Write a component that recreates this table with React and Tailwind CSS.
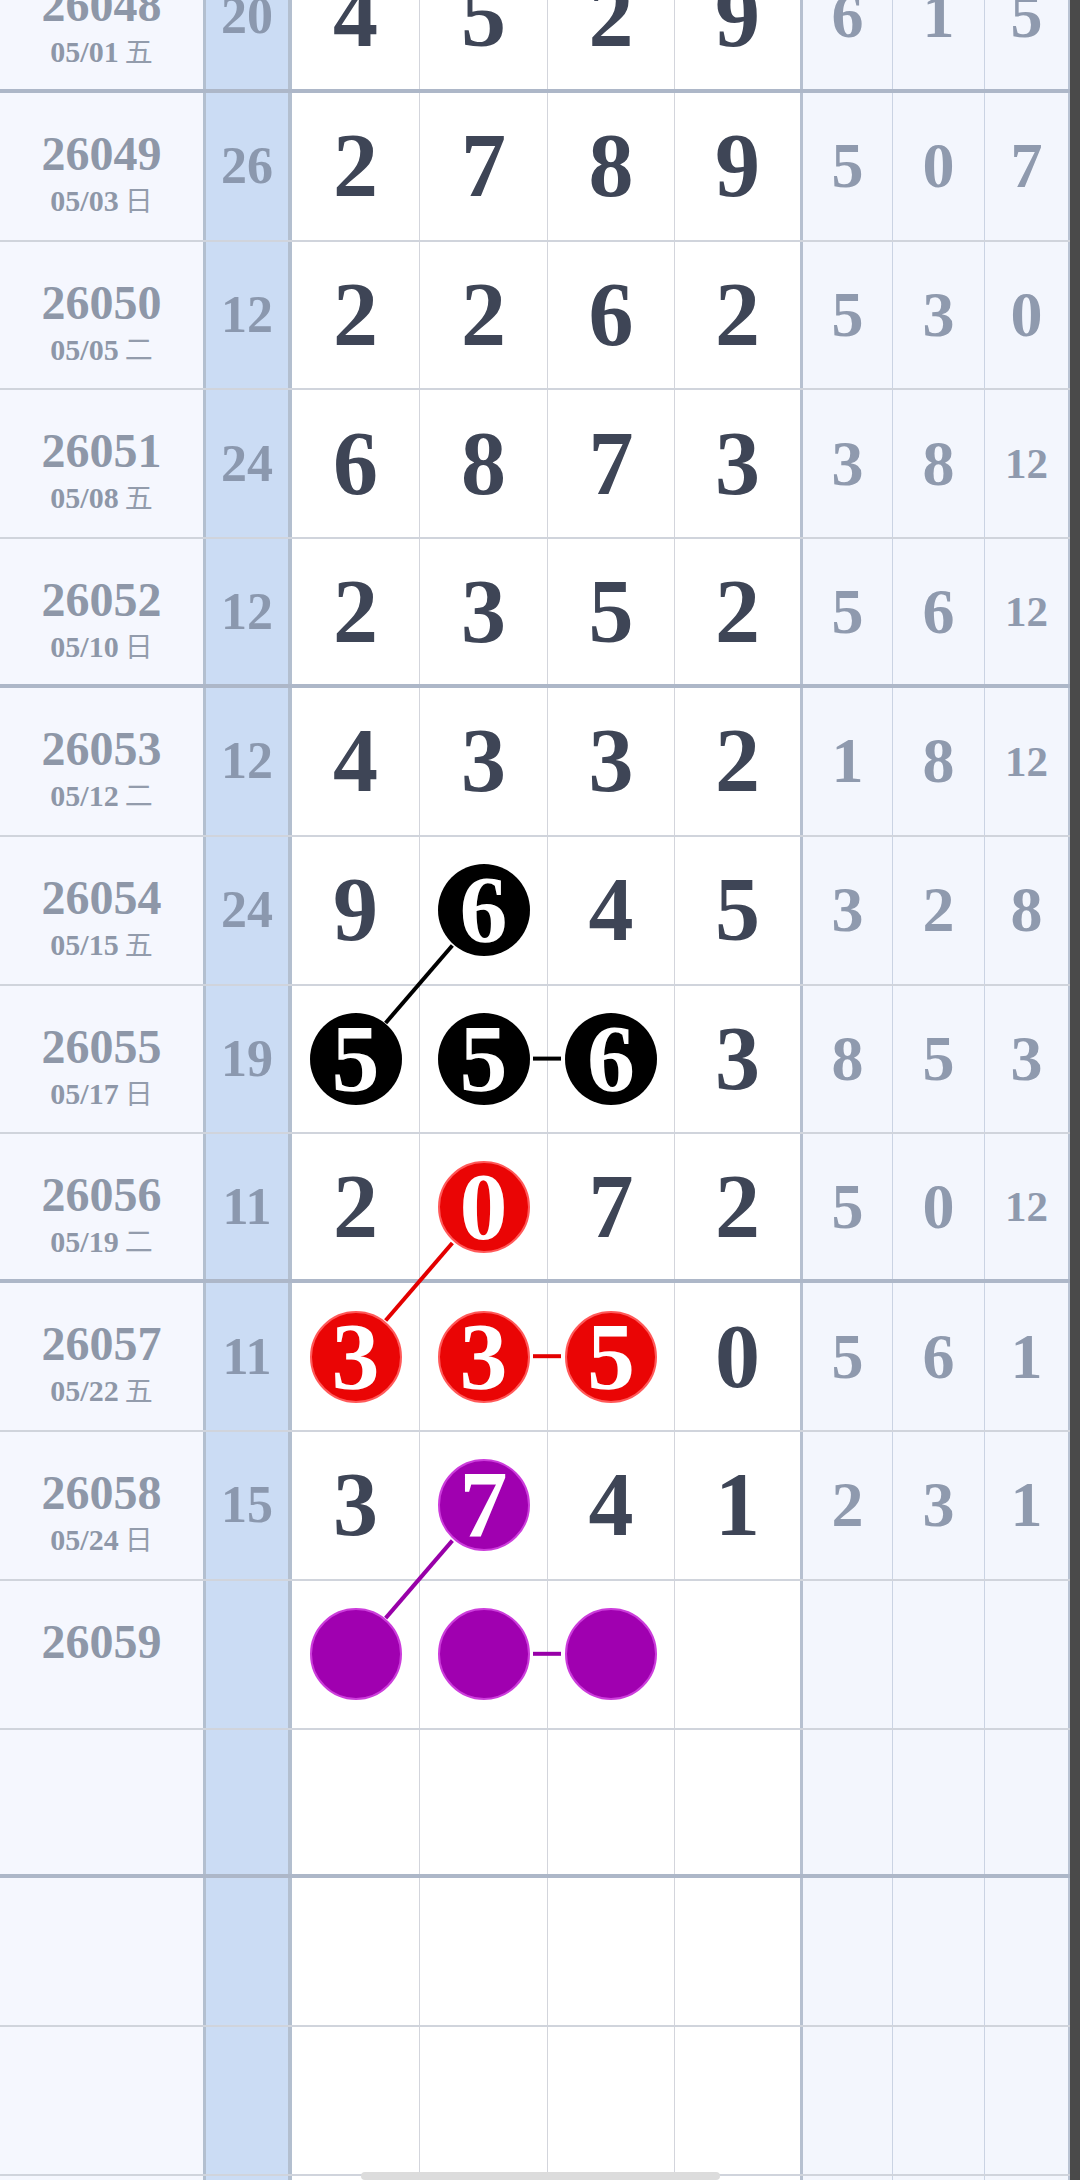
const ROWS = [
  { no: '26048', date: '05/01', wd: '五', sum: '20', d: [4, 5, 2, 9], s: [6, 1, 5] },
  { no: '26049', date: '05/03', wd: '日', sum: '26', d: [2, 7, 8, 9], s: [5, 0, 7] },
  { no: '26050', date: '05/05', wd: '二', sum: '12', d: [2, 2, 6, 2], s: [5, 3, 0] },
  { no: '26051', date: '05/08', wd: '五', sum: '24', d: [6, 8, 7, 3], s: [3, 8, 12] },
  { no: '26052', date: '05/10', wd: '日', sum: '12', d: [2, 3, 5, 2], s: [5, 6, 12] },
  { no: '26053', date: '05/12', wd: '二', sum: '12', d: [4, 3, 3, 2], s: [1, 8, 12] },
  { no: '26054', date: '05/15', wd: '五', sum: '24', d: [9, 6, 4, 5], s: [3, 2, 8], balls: { 1: 'black' } },
  { no: '26055', date: '05/17', wd: '日', sum: '19', d: [5, 5, 6, 3], s: [8, 5, 3], balls: { 0: 'black', 1: 'black', 2: 'black' } },
  { no: '26056', date: '05/19', wd: '二', sum: '11', d: [2, 0, 7, 2], s: [5, 0, 12], balls: { 1: 'red' } },
  { no: '26057', date: '05/22', wd: '五', sum: '11', d: [3, 3, 5, 0], s: [5, 6, 1], balls: { 0: 'red', 1: 'red', 2: 'red' } },
  { no: '26058', date: '05/24', wd: '日', sum: '15', d: [3, 7, 4, 1], s: [2, 3, 1], balls: { 1: 'purple' } },
  { no: '26059', date: '', wd: '', sum: '', d: ['', '', '', ''], s: ['', '', ''], balls: { 0: 'purple', 1: 'purple', 2: 'purple' } },
  { no: '', date: '', wd: '', sum: '', d: ['', '', '', ''], s: ['', '', ''] },
  { no: '', date: '', wd: '', sum: '', d: ['', '', '', ''], s: ['', '', ''] },
  { no: '', date: '', wd: '', sum: '', d: ['', '', '', ''], s: ['', '', ''] },
  { no: '', date: '', wd: '', sum: '', d: ['', '', '', ''], s: ['', '', ''] },
]

// [row, digitCol] -> [row, digitCol]
const LINES = [
  [7, 0, 6, 1, '#000000'],
  [7, 1, 7, 2, '#000000'],
  [9, 0, 8, 1, '#e30000'],
  [9, 1, 9, 2, '#e30000'],
  [11, 0, 10, 1, '#9800a8'],
  [11, 1, 11, 2, '#9800a8'],
]

const COL_X = [355, 483, 611, 737]
const ROW_H = 148.8
const R = 47

const BALL = {
  black: 'bg-black',
  red: 'bg-[#ea0505] border-2 border-[#ff5a5a]',
  purple: 'bg-[#a000b0] border-2 border-[#cc3ddb]',
}

const serif = "font-['Liberation_Serif',serif] font-bold"

function Ball({ color, value }) {
  return (
    <div className={`w-[92px] h-[92px] rounded-full flex items-center justify-center text-white text-[96px] leading-none ${BALL[color]}`}>
      {value}
    </div>
  )
}

function Row({ row, i }) {
  const thick = i % 4 === 0
  return (
    <div
      className={`grid grid-cols-[206px_86px_128px_128px_127px_128px_90px_92px_85px] h-[148.8px] ${
        thick ? 'border-b-4 border-[#adb7c8]' : 'border-b-2 border-[#d0d4dc]'
      } ${serif}`}
    >
      <div className="bg-[#f5f7fe] border-r-[3px] border-[#b3bfcf] flex flex-col items-center pt-[37px] text-[#8e97a8]">
        <div className="text-[48px] leading-[48px]">{row.no}</div>
        <div className="mt-[2px] h-[38px] text-[30px] leading-[38px] flex items-baseline gap-[6px]">
          <span>{row.date}</span>
          <span className="font-['Noto_Sans_CJK_SC',sans-serif] font-normal text-[28px] text-[#939cac]">{row.wd}</span>
        </div>
      </div>
      <div className="bg-[#cbdcf4] border-r-4 border-[#b3bfcf] flex items-center justify-center text-[52px] text-[#8b98ae]">
        {row.sum}
      </div>
      {row.d.map((v, c) => (
        <div
          key={c}
          className={`bg-white flex items-center justify-center text-[90px] leading-none text-[#3e4556] ${
            c === 3 ? 'border-r-[3px] border-[#b6c0d0]' : 'border-r-[1.5px] border-[#d3d5dc]'
          }`}
        >
          {row.balls && row.balls[c] ? <Ball color={row.balls[c]} value={v} /> : v}
        </div>
      ))}
      {row.s.map((v, c) => (
        <div
          key={c}
          className={`bg-[#f3f6fd] flex items-center justify-center leading-none text-[#8f9aae] ${
            String(v).length > 1 ? 'text-[43px]' : 'text-[64px]'
          } ${c === 2 ? 'border-r-2 border-[#b9c3d3]' : 'border-r-[1.5px] border-[#cad3e3]'}`}
        >
          {v}
        </div>
      ))}
    </div>
  )
}

export default function App() {
  return (
    <div className="w-[1080px] h-[2180px] overflow-hidden bg-[#4a4a4a] relative">
      <div className="w-[1070px] -mt-[56px] relative">
        {ROWS.map((row, i) => (
          <Row key={i} row={row} i={i} />
        ))}

        {/* connector lines between balls */}
        <svg className="absolute inset-0 pointer-events-none" width="1070" height={ROWS.length * ROW_H}>
          {LINES.map(([r1, c1, r2, c2, color], k) => {
            const x1 = COL_X[c1]
            const y1 = r1 * ROW_H + 73
            const x2 = COL_X[c2]
            const y2 = r2 * ROW_H + 73
            const len = Math.hypot(x2 - x1, y2 - y1)
            const ux = (x2 - x1) / len
            const uy = (y2 - y1) / len
            const gap = y1 === y2 ? R + 3 : R
            return (
              <line
                key={k}
                x1={x1 + ux * gap}
                y1={y1 + uy * gap}
                x2={x2 - ux * gap}
                y2={y2 - uy * gap}
                stroke={color}
                strokeWidth="4"
              />
            )
          })}
        </svg>
      </div>

      {/* horizontal scrollbar thumb */}
      <div className="absolute left-[361px] bottom-0 w-[359px] h-[8px] rounded-full bg-[#dcdcdc]" />
    </div>
  )
}
